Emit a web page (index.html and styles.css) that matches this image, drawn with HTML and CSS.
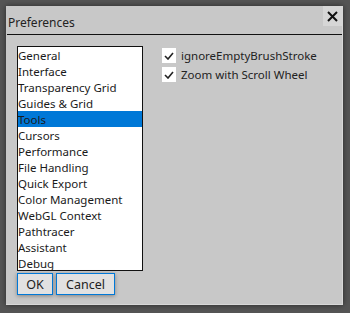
FILE: index.html
```html
<!DOCTYPE html>
<html lang="en">
<head>
    <meta charset="UTF-8">
    <title>Preferences</title>
    <link rel="stylesheet" href="styles.css">
</head>
<body>

    <div class="dialog">
        <div class="title-bar">
            <span class="title">Preferences</span>
            <button class="close-btn">
                <svg width="11" height="11" viewBox="0 0 11 11"><path d="M1 1 L10 10 M10 1 L1 10" stroke="#111" stroke-width="2"/></svg>
            </button>
        </div>

        <div class="dialog-body">
            <div class="left-col">
                <ul class="category-list">
                    <li>General</li>
                    <li>Interface</li>
                    <li>Transparency Grid</li>
                    <li>Guides &amp; Grid</li>
                    <li class="selected">Tools</li>
                    <li>Cursors</li>
                    <li>Performance</li>
                    <li>File Handling</li>
                    <li>Quick Export</li>
                    <li>Color Management</li>
                    <li>WebGL Context</li>
                    <li>Pathtracer</li>
                    <li>Assistant</li>
                    <li>Debug</li>
                </ul>
                <div class="buttons">
                    <button class="btn ok">OK</button>
                    <button class="btn">Cancel</button>
                </div>
            </div>

            <div class="options">
                <label class="option">
                    <span class="check">
                        <svg width="10" height="8" viewBox="0 0 10 8"><path d="M1 4 L4 7 L9 1" fill="none" stroke="#222" stroke-width="1.6"/></svg>
                    </span>
                    ignoreEmptyBrushStroke
                </label>
                <label class="option">
                    <span class="check">
                        <svg width="10" height="8" viewBox="0 0 10 8"><path d="M1 4 L4 7 L9 1" fill="none" stroke="#222" stroke-width="1.6"/></svg>
                    </span>
                    Zoom with Scroll Wheel
                </label>
            </div>
        </div>
    </div>

</body>
</html>
```

FILE: styles.css
```css
html, body {
    margin: 0;
    height: 100%;
}
body {
    background-color: #555555;
    font-family: "Noto Sans", "Open Sans", sans-serif;
    font-size: 11.5px;
    color: #1a1a1a;
    padding: 6px 0 0 6px;
    box-sizing: border-box;
}
.dialog {
    width: 337px;
    height: 299px;
    background-color: #c8c8c8;
    box-shadow: 0 0 6px rgba(0, 0, 0, 0.5);
    border-right: 1px solid #d8d8d8;
    border-bottom: 1px solid #d8d8d8;
    box-sizing: border-box;
}
.title-bar {
    display: flex;
    justify-content: space-between;
    align-items: flex-start;
    height: 28px;
    border-bottom: 1px solid #111;
    margin-left: 1px;
}
.title {
    padding-top: 8px;
    padding-left: 1px;
    font-size: 12px;
    color: #222;
}
.close-btn {
    display: flex;
    align-items: center;
    justify-content: center;
    width: 19px;
    height: 20px;
    border: none;
    background-color: #d6d6d6;
    padding: 0;
}
.dialog-body {
    display: flex;
    padding: 11px 0 0 11px;
}
.left-col {
    display: flex;
    flex-direction: column;
}
.category-list {
    list-style: none;
    margin: 0;
    padding: 0;
    width: 126px;
    height: 225px;
    background-color: #fff;
    border: 1px solid #111;
    box-sizing: border-box;
    overflow: hidden;
}
.category-list li {
    height: 16px;
    line-height: 17px;
    white-space: nowrap;
}
.category-list li.selected {
    background-color: #0078d7;
}
.buttons {
    display: flex;
    gap: 3px;
    margin-top: 2px;
}
.btn {
    height: 22px;
    padding: 0 9px;
    font-family: inherit;
    font-size: 12.5px;
    color: #222;
    background-color: #e1e1e1;
    border: 1px solid #0078d7;
    box-shadow: 0 1px 4px rgba(0, 0, 0, 0.35);
}
.btn.ok {
    width: 36px;
    padding: 0;
}
.options {
    display: flex;
    flex-direction: column;
    gap: 4px;
    margin-left: 19px;
    padding-top: 2px;
}
.option {
    display: flex;
    align-items: center;
    gap: 5px;
    height: 15px;
    font-size: 11.5px;
    color: #222;
}
.check {
    display: flex;
    align-items: center;
    justify-content: center;
    width: 14px;
    height: 15px;
    background-color: #fff;
}
```
